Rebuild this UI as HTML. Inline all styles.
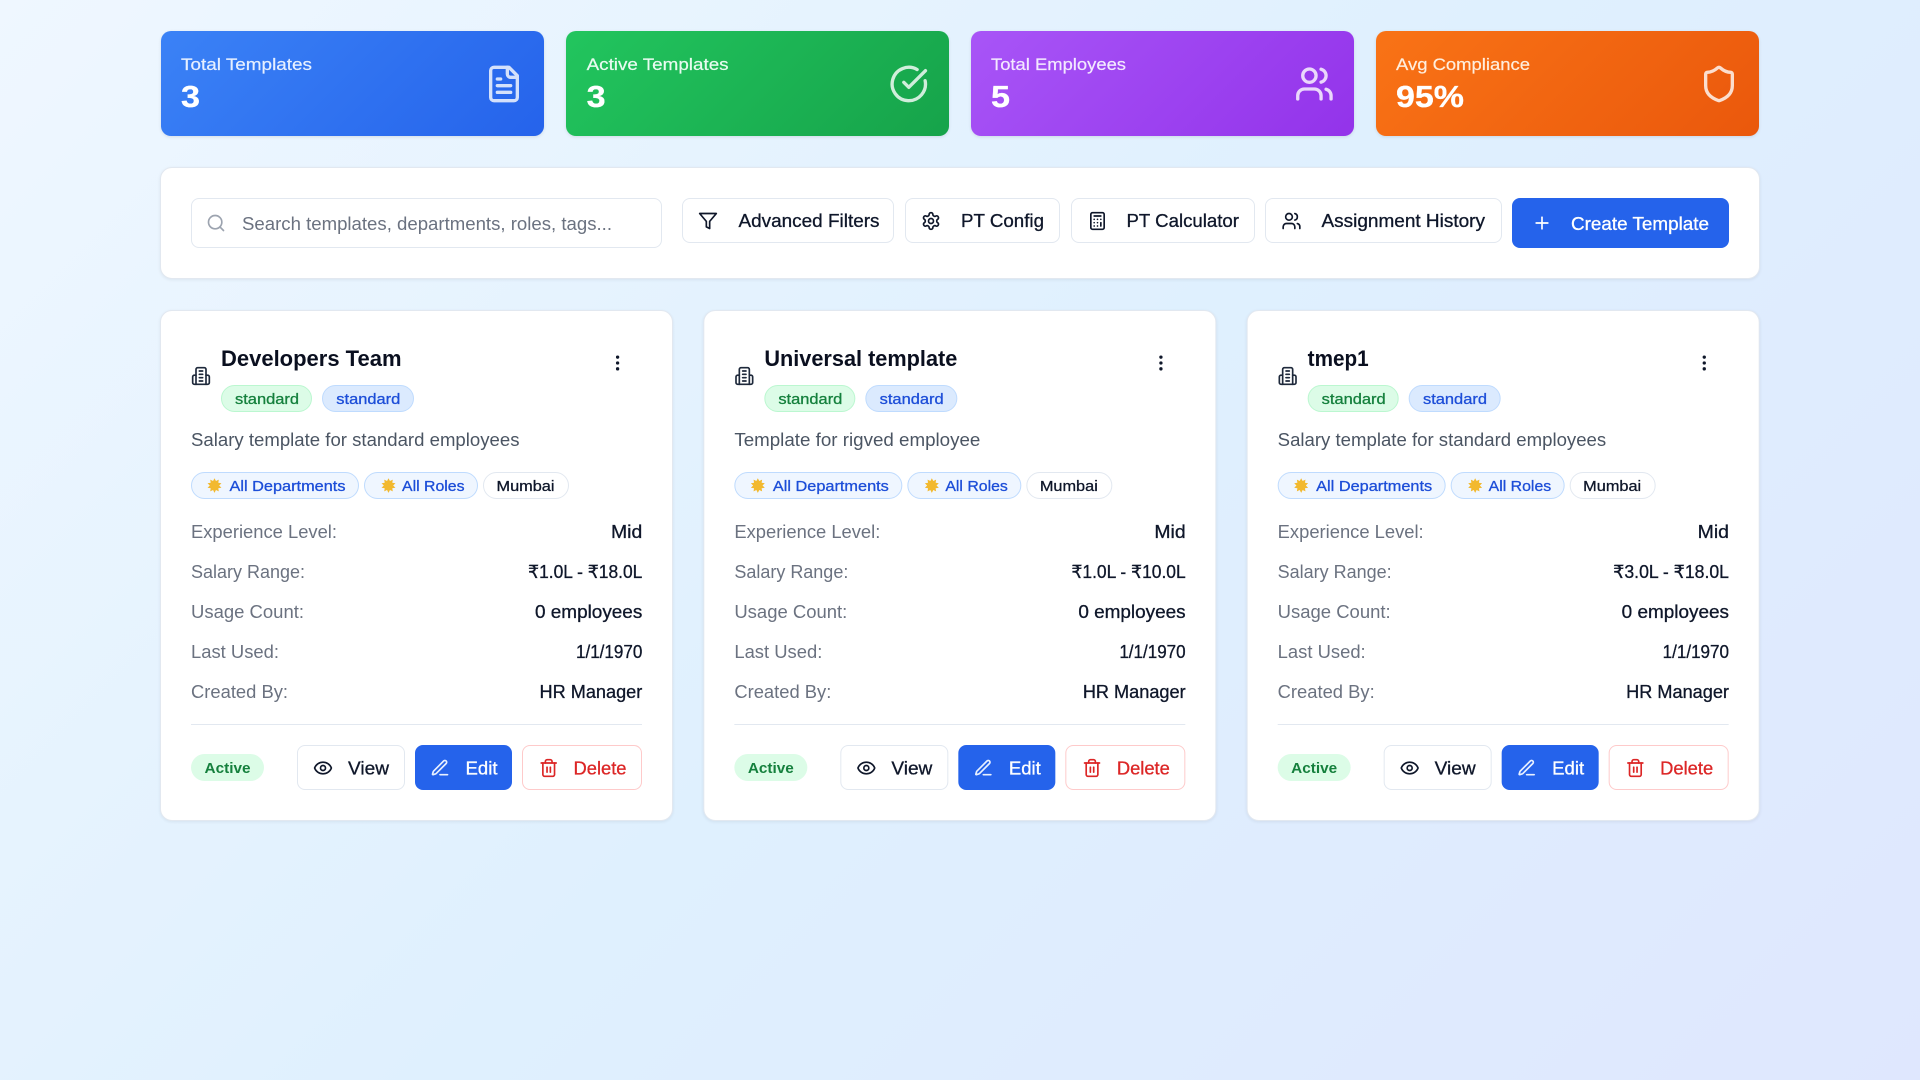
<!DOCTYPE html>
<html lang="en">
<head>
<meta charset="utf-8">
<title>Salary Templates</title>
<style>
html,body{margin:0;padding:0;width:1920px;height:1080px;overflow:hidden}
body{position:relative;background:linear-gradient(135deg,#eff7ff 0%,#dff0fe 50%,#dfe7fe 100%);font-family:"Liberation Sans",Arial,sans-serif}
.b{position:absolute;box-sizing:border-box}
.c{position:absolute;left:0;top:0;width:0;height:0}
.stat{top:31px;height:105px;width:383px;border-radius:10px;box-shadow:0 1px 3px rgba(0,0,0,.1)}
.panel{background:#fff;border:1px solid #e2e8f0;border-radius:12px;box-shadow:0 1px 3px rgba(15,23,42,.07)}
.btn{background:#fff;border:1px solid #e2e8f0;border-radius:8px}
.pill{border-radius:14px;border:1px solid}
svg.o{position:absolute;left:0;top:0}
text{font-family:"Liberation Sans",Arial,"DejaVu Sans",sans-serif;white-space:pre}
.i{fill:none;stroke:currentColor;stroke-width:2;stroke-linecap:round;stroke-linejoin:round}
.m{stroke:currentColor;stroke-width:.3}
.lb{font-size:18px;fill:#6b7280}
.v{font-size:18px;fill:#0f172a;color:#0f172a}
.tag{font-size:15px}
.ttl{font-size:22.5px;font-weight:700;fill:#0a0f1f}
</style>
</head>
<body>
<div class="b stat" style="left:161px;background:linear-gradient(135deg,#3b82f6,#2563eb)"></div>
<div class="b stat" style="left:566px;background:linear-gradient(135deg,#22c55e,#16a34a)"></div>
<div class="b stat" style="left:971px;background:linear-gradient(135deg,#a855f7,#9333ea)"></div>
<div class="b stat" style="left:1376px;background:linear-gradient(135deg,#f97316,#ea580c)"></div>

<div class="b panel" style="left:160.4px;top:167px;width:1599.2px;height:111.5px"></div>
<div class="b btn" style="left:191px;top:198px;width:471px;height:50px"></div>
<div class="b btn" style="left:682px;top:198px;width:212px;height:45px"></div>
<div class="b btn" style="left:905px;top:198px;width:155px;height:45px"></div>
<div class="b btn" style="left:1071px;top:198px;width:184px;height:45px"></div>
<div class="b btn" style="left:1265px;top:198px;width:237px;height:45px"></div>
<div class="b" style="left:1512px;top:198px;width:217px;height:50px;border-radius:8px;background:#2563eb"></div>

<!-- card 1 -->
<div class="c">
<div class="b panel" style="left:160.4px;top:309.5px;width:512.5px;height:511px"></div>
<div class="b pill" style="left:221px;top:385px;width:91px;height:27px;background:#dcfce7;border-color:#bbf7d0"></div>
<div class="b pill" style="left:322px;top:385px;width:91.5px;height:27px;background:#dbeafe;border-color:#bfdbfe"></div>
<div class="b pill" style="left:191px;top:472px;width:168px;height:27px;background:#eff6ff;border-color:#bfdbfe"></div>
<div class="b pill" style="left:364px;top:472px;width:113.5px;height:27px;background:#eff6ff;border-color:#bfdbfe"></div>
<div class="b pill" style="left:482.8px;top:472px;width:86px;height:27px;background:#fff;border-color:#e2e8f0"></div>
<div class="b" style="left:191px;top:724px;width:451.33px;height:1px;background:#e2e8f0"></div>
<div class="b" style="left:191px;top:754px;width:73px;height:27px;border-radius:14px;background:#dcfce7"></div>
<div class="b btn" style="left:297px;top:745px;width:108px;height:45px"></div>
<div class="b" style="left:415px;top:745px;width:97px;height:45px;border-radius:8px;background:#2563eb"></div>
<div class="b btn" style="left:522px;top:745px;width:120.33px;height:45px;border-color:#fecaca"></div>
</div>

<!-- card 2 -->
<div class="c" style="transform:translateX(543.33px)">
<div class="b panel" style="left:160.4px;top:309.5px;width:512.5px;height:511px"></div>
<div class="b pill" style="left:221px;top:385px;width:91px;height:27px;background:#dcfce7;border-color:#bbf7d0"></div>
<div class="b pill" style="left:322px;top:385px;width:91.5px;height:27px;background:#dbeafe;border-color:#bfdbfe"></div>
<div class="b pill" style="left:191px;top:472px;width:168px;height:27px;background:#eff6ff;border-color:#bfdbfe"></div>
<div class="b pill" style="left:364px;top:472px;width:113.5px;height:27px;background:#eff6ff;border-color:#bfdbfe"></div>
<div class="b pill" style="left:482.8px;top:472px;width:86px;height:27px;background:#fff;border-color:#e2e8f0"></div>
<div class="b" style="left:191px;top:724px;width:451.33px;height:1px;background:#e2e8f0"></div>
<div class="b" style="left:191px;top:754px;width:73px;height:27px;border-radius:14px;background:#dcfce7"></div>
<div class="b btn" style="left:297px;top:745px;width:108px;height:45px"></div>
<div class="b" style="left:415px;top:745px;width:97px;height:45px;border-radius:8px;background:#2563eb"></div>
<div class="b btn" style="left:522px;top:745px;width:120.33px;height:45px;border-color:#fecaca"></div>
</div>

<!-- card 3 -->
<div class="c" style="transform:translateX(1086.67px)">
<div class="b panel" style="left:160.4px;top:309.5px;width:512.5px;height:511px"></div>
<div class="b pill" style="left:221px;top:385px;width:91px;height:27px;background:#dcfce7;border-color:#bbf7d0"></div>
<div class="b pill" style="left:322px;top:385px;width:91.5px;height:27px;background:#dbeafe;border-color:#bfdbfe"></div>
<div class="b pill" style="left:191px;top:472px;width:168px;height:27px;background:#eff6ff;border-color:#bfdbfe"></div>
<div class="b pill" style="left:364px;top:472px;width:113.5px;height:27px;background:#eff6ff;border-color:#bfdbfe"></div>
<div class="b pill" style="left:482.8px;top:472px;width:86px;height:27px;background:#fff;border-color:#e2e8f0"></div>
<div class="b" style="left:191px;top:724px;width:451.33px;height:1px;background:#e2e8f0"></div>
<div class="b" style="left:191px;top:754px;width:73px;height:27px;border-radius:14px;background:#dcfce7"></div>
<div class="b btn" style="left:297px;top:745px;width:108px;height:45px"></div>
<div class="b" style="left:415px;top:745px;width:97px;height:45px;border-radius:8px;background:#2563eb"></div>
<div class="b btn" style="left:522px;top:745px;width:120.33px;height:45px;border-color:#fecaca"></div>
</div>

<svg class="o" width="1920" height="1080" viewBox="0 0 1920 1080" xmlns="http://www.w3.org/2000/svg">
<defs>
<symbol id="file" viewBox="0 0 24 24"><g class="i"><path d="M15 2H6a2 2 0 0 0-2 2v16a2 2 0 0 0 2 2h12a2 2 0 0 0 2-2V7Z"/><path d="M14 2v4a2 2 0 0 0 2 2h4"/><path d="M10 9H8"/><path d="M16 13H8"/><path d="M16 17H8"/></g></symbol>
<symbol id="check" viewBox="0 0 24 24"><g class="i"><path d="M21.801 10A10 10 0 1 1 17 3.335"/><path d="m9 11 3 3L22 4"/></g></symbol>
<symbol id="users" viewBox="0 0 24 24"><g class="i"><path d="M16 21v-2a4 4 0 0 0-4-4H6a4 4 0 0 0-4 4v2"/><circle cx="9" cy="7" r="4"/><path d="M22 21v-2a4 4 0 0 0-3-3.87"/><path d="M16 3.13a4 4 0 0 1 0 7.75"/></g></symbol>
<symbol id="shield" viewBox="0 0 24 24"><g class="i"><path d="M20 13c0 5-3.5 7.5-7.66 8.95a1 1 0 0 1-.67-.01C7.5 20.5 4 18 4 13V6a1 1 0 0 1 1-1c2 0 4.5-1.2 6.24-2.72a1.17 1.17 0 0 1 1.52 0C14.51 3.81 17 5 19 5a1 1 0 0 1 1 1z"/></g></symbol>
<symbol id="search" viewBox="0 0 24 24"><g class="i"><circle cx="11" cy="11" r="8"/><path d="m21 21-4.3-4.3"/></g></symbol>
<symbol id="funnel" viewBox="0 0 24 24"><g class="i"><polygon points="22 3 2 3 10 12.46 10 19 14 21 14 12.46 22 3"/></g></symbol>
<symbol id="gear" viewBox="0 0 24 24"><g class="i"><path d="M12.22 2h-.44a2 2 0 0 0-2 2v.18a2 2 0 0 1-1 1.73l-.43.25a2 2 0 0 1-2 0l-.15-.08a2 2 0 0 0-2.73.73l-.22.38a2 2 0 0 0 .73 2.73l.15.1a2 2 0 0 1 1 1.72v.51a2 2 0 0 1-1 1.74l-.15.09a2 2 0 0 0-.73 2.73l.22.38a2 2 0 0 0 2.73.73l.15-.08a2 2 0 0 1 2 0l.43.25a2 2 0 0 1 1 1.73V20a2 2 0 0 0 2 2h.44a2 2 0 0 0 2-2v-.18a2 2 0 0 1 1-1.73l.43-.25a2 2 0 0 1 2 0l.15.08a2 2 0 0 0 2.73-.73l.22-.39a2 2 0 0 0-.73-2.73l-.15-.08a2 2 0 0 1-1-1.74v-.5a2 2 0 0 1 1-1.74l.15-.09a2 2 0 0 0 .73-2.73l-.22-.38a2 2 0 0 0-2.73-.73l-.15.08a2 2 0 0 1-2 0l-.43-.25a2 2 0 0 1-1-1.73V4a2 2 0 0 0-2-2z"/><circle cx="12" cy="12" r="3"/></g></symbol>
<symbol id="calc" viewBox="0 0 24 24"><g class="i"><rect x="4" y="2" width="16" height="20" rx="2"/><path d="M8 6h8"/><path d="M16 14v4"/><path d="M16 10h.01M12 10h.01M8 10h.01M12 14h.01M8 14h.01M12 18h.01M8 18h.01"/></g></symbol>
<symbol id="plus" viewBox="0 0 24 24"><g class="i"><path d="M5 12h14"/><path d="M12 5v14"/></g></symbol>
<symbol id="bld" viewBox="0 0 24 24"><g class="i"><path d="M6 22V4a2 2 0 0 1 2-2h8a2 2 0 0 1 2 2v18Z"/><path d="M6 11H4a2 2 0 0 0-2 2v7a2 2 0 0 0 2 2h2"/><path d="M18 11h2a2 2 0 0 1 2 2v7a2 2 0 0 1-2 2h-2"/><path d="M10 6h4"/><path d="M10 10h4"/><path d="M10 14h4"/><path d="M10 18h4"/></g></symbol>
<symbol id="more" viewBox="0 0 24 24"><g class="i"><circle cx="12" cy="12" r="1"/><circle cx="12" cy="5" r="1"/><circle cx="12" cy="19" r="1"/></g></symbol>
<symbol id="eye" viewBox="0 0 24 24"><g class="i"><path d="M2.062 12.348a1 1 0 0 1 0-.696 10.75 10.75 0 0 1 19.876 0 1 1 0 0 1 0 .696 10.75 10.75 0 0 1-19.876 0"/><circle cx="12" cy="12" r="3"/></g></symbol>
<symbol id="pen" viewBox="0 0 24 24"><g class="i"><path d="M12 20h9"/><path d="M16.376 3.622a1 1 0 0 1 3.002 3.002L7.368 18.635a2 2 0 0 1-.855.506l-2.872.838a.5.5 0 0 1-.62-.62l.838-2.872a2 2 0 0 1 .506-.854z"/></g></symbol>
<symbol id="trash" viewBox="0 0 24 24"><g class="i"><path d="M3 6h18"/><path d="M19 6v14c0 1-1 2-2 2H7c-1 0-2-1-2-2V6"/><path d="M8 6V4c0-1 1-2 2-2h4c1 0 2 1 2 2v2"/><path d="M10 11v6"/><path d="M14 11v6"/></g></symbol>
<symbol id="star" viewBox="0 0 16 16"><polygon fill="#f2b92f" points="8,.2 9.55,3.24 12.58,1.69 12.05,5.06 15.42,5.59 13,8 15.42,10.41 12.05,10.94 12.58,14.31 9.55,12.76 8,15.8 6.45,12.76 3.42,14.31 3.95,10.94 .58,10.41 3,8 .58,5.59 3.95,5.06 3.42,1.69 6.45,3.24"/></symbol>
</defs>

<!-- stats -->
<g fill="#fff">
<text class="m" style="stroke-width:.2" color="#e6efff" x="181" y="70" font-size="16.5" textLength="131" lengthAdjust="spacingAndGlyphs" fill="#e6efff">Total Templates</text>
<text class="m" color="#fff" x="181" y="107" font-size="31" font-weight="700" textLength="19" lengthAdjust="spacingAndGlyphs">3</text>
<text class="m" style="stroke-width:.2" color="#e8fbf0" x="586.6" y="70" font-size="16.5" textLength="142" lengthAdjust="spacingAndGlyphs" fill="#e8fbf0">Active Templates</text>
<text class="m" color="#fff" x="586.6" y="107" font-size="31" font-weight="700" textLength="19" lengthAdjust="spacingAndGlyphs">3</text>
<text class="m" style="stroke-width:.2" color="#f3e8ff" x="991" y="70" font-size="16.5" textLength="135" lengthAdjust="spacingAndGlyphs" fill="#f3e8ff">Total Employees</text>
<text class="m" color="#fff" x="991" y="107" font-size="31" font-weight="700" textLength="19" lengthAdjust="spacingAndGlyphs">5</text>
<text class="m" style="stroke-width:.2" color="#ffeedd" x="1396" y="70" font-size="16.5" textLength="134" lengthAdjust="spacingAndGlyphs" fill="#ffeedd">Avg Compliance</text>
<text class="m" color="#fff" x="1396" y="107" font-size="31" font-weight="700" textLength="68" lengthAdjust="spacingAndGlyphs">95%</text>
</g>
<g color="#fff" opacity=".8">
<use href="#file" x="484" y="64" width="40" height="40"/>
<use href="#check" x="888.8" y="64" width="40" height="40"/>
<use href="#users" x="1294.4" y="64" width="40" height="40"/>
<use href="#shield" x="1699" y="64" width="40" height="40"/>
</g>

<!-- toolbar -->
<use href="#search" x="206" y="213" width="20" height="20" color="#9ca3af"/>
<text x="242" y="230" font-size="18" fill="#6b7280" textLength="370" lengthAdjust="spacingAndGlyphs">Search templates, departments, roles, tags...</text>
<g color="#0f172a">
<use href="#funnel" x="698" y="211" width="20" height="20"/>
<use href="#gear" x="921" y="211" width="20" height="20"/>
<use href="#calc" x="1087.5" y="211" width="20" height="20"/>
<use href="#users" x="1281.5" y="211" width="20" height="20"/>
</g>
<g class="v" font-size="18">
<text class="m v" x="738.5" y="227" textLength="141" lengthAdjust="spacingAndGlyphs">Advanced Filters</text>
<text class="m v" x="961" y="227" textLength="83" lengthAdjust="spacingAndGlyphs">PT Config</text>
<text class="m v" x="1126.5" y="227" textLength="112.5" lengthAdjust="spacingAndGlyphs">PT Calculator</text>
<text class="m v" x="1321.5" y="227" textLength="163.5" lengthAdjust="spacingAndGlyphs">Assignment History</text>
</g>
<use href="#plus" x="1532" y="213" width="20" height="20" color="#fff"/>
<text class="m" x="1571" y="230" font-size="18" fill="#fff" color="#fff" textLength="138" lengthAdjust="spacingAndGlyphs">Create Template</text>

<!-- CARD 1 -->
<g>
<use href="#bld" x="191" y="366" width="20" height="20" color="#1e293b"/>
<text class="ttl" x="221" y="366" textLength="180.5" lengthAdjust="spacingAndGlyphs">Developers Team</text>
<use href="#more" x="607.6" y="353" width="20" height="20" color="#0f172a"/>
<text class="tag m" x="235" y="404" fill="#15803d" color="#15803d" textLength="64" lengthAdjust="spacingAndGlyphs">standard</text>
<text class="tag m" x="336.3" y="404" fill="#1d4ed8" color="#1d4ed8" textLength="64" lengthAdjust="spacingAndGlyphs">standard</text>
<text x="191" y="446" font-size="18" fill="#4b5563" textLength="328.5" lengthAdjust="spacingAndGlyphs">Salary template for standard employees</text>
<use href="#star" x="207" y="478" width="15" height="15"/>
<text class="tag m" x="229.5" y="491" fill="#1d4ed8" color="#1d4ed8" textLength="116" lengthAdjust="spacingAndGlyphs">All Departments</text>
<use href="#star" x="381" y="478" width="15" height="15"/>
<text class="tag m" x="402" y="491" fill="#1d4ed8" color="#1d4ed8" textLength="62.5" lengthAdjust="spacingAndGlyphs">All Roles</text>
<text class="tag m" x="496.5" y="491" fill="#0f172a" color="#0f172a" textLength="58" lengthAdjust="spacingAndGlyphs">Mumbai</text>
<text class="lb" x="191" y="538" textLength="146" lengthAdjust="spacingAndGlyphs">Experience Level:</text>
<text class="lb" x="191" y="578" textLength="114" lengthAdjust="spacingAndGlyphs">Salary Range:</text>
<text class="lb" x="191" y="618" textLength="113" lengthAdjust="spacingAndGlyphs">Usage Count:</text>
<text class="lb" x="191" y="658" textLength="88" lengthAdjust="spacingAndGlyphs">Last Used:</text>
<text class="lb" x="191" y="698" textLength="97" lengthAdjust="spacingAndGlyphs">Created By:</text>
<text class="v m" x="611" y="538" textLength="31.3" lengthAdjust="spacingAndGlyphs">Mid</text>
<text class="v m" x="528" y="578" textLength="114.3" lengthAdjust="spacingAndGlyphs">₹1.0L - ₹18.0L</text>
<text class="v m" x="535" y="618" textLength="107.3" lengthAdjust="spacingAndGlyphs">0 employees</text>
<text class="v m" x="576" y="658" textLength="66.3" lengthAdjust="spacingAndGlyphs">1/1/1970</text>
<text class="v m" x="539.5" y="698" textLength="102.8" lengthAdjust="spacingAndGlyphs">HR Manager</text>
<text class="tag" font-weight="700" x="204.5" y="773" fill="#15803d" textLength="46" lengthAdjust="spacingAndGlyphs">Active</text>
<use href="#eye" x="313" y="758" width="20" height="20" color="#0f172a"/>
<text class="v m" x="348" y="774.5" textLength="41" lengthAdjust="spacingAndGlyphs">View</text>
<use href="#pen" x="430" y="758" width="20" height="20" color="#e8f0ff"/>
<text class="m" x="465.5" y="774.5" font-size="18" fill="#fff" color="#fff" textLength="32" lengthAdjust="spacingAndGlyphs">Edit</text>
<use href="#trash" x="538.7" y="758" width="20" height="20" color="#dc2626"/>
<text class="m" x="573.5" y="774.5" font-size="18" fill="#dc2626" color="#dc2626" textLength="53" lengthAdjust="spacingAndGlyphs">Delete</text>
</g>

<!-- CARD 2 -->
<g transform="translate(543.33 0)">
<use href="#bld" x="191" y="366" width="20" height="20" color="#1e293b"/>
<text class="ttl" x="221" y="366" textLength="193" lengthAdjust="spacingAndGlyphs">Universal template</text>
<use href="#more" x="607.6" y="353" width="20" height="20" color="#0f172a"/>
<text class="tag m" x="235" y="404" fill="#15803d" color="#15803d" textLength="64" lengthAdjust="spacingAndGlyphs">standard</text>
<text class="tag m" x="336.3" y="404" fill="#1d4ed8" color="#1d4ed8" textLength="64" lengthAdjust="spacingAndGlyphs">standard</text>
<text x="191" y="446" font-size="18" fill="#4b5563" textLength="246" lengthAdjust="spacingAndGlyphs">Template for rigved employee</text>
<use href="#star" x="207" y="478" width="15" height="15"/>
<text class="tag m" x="229.5" y="491" fill="#1d4ed8" color="#1d4ed8" textLength="116" lengthAdjust="spacingAndGlyphs">All Departments</text>
<use href="#star" x="381" y="478" width="15" height="15"/>
<text class="tag m" x="402" y="491" fill="#1d4ed8" color="#1d4ed8" textLength="62.5" lengthAdjust="spacingAndGlyphs">All Roles</text>
<text class="tag m" x="496.5" y="491" fill="#0f172a" color="#0f172a" textLength="58" lengthAdjust="spacingAndGlyphs">Mumbai</text>
<text class="lb" x="191" y="538" textLength="146" lengthAdjust="spacingAndGlyphs">Experience Level:</text>
<text class="lb" x="191" y="578" textLength="114" lengthAdjust="spacingAndGlyphs">Salary Range:</text>
<text class="lb" x="191" y="618" textLength="113" lengthAdjust="spacingAndGlyphs">Usage Count:</text>
<text class="lb" x="191" y="658" textLength="88" lengthAdjust="spacingAndGlyphs">Last Used:</text>
<text class="lb" x="191" y="698" textLength="97" lengthAdjust="spacingAndGlyphs">Created By:</text>
<text class="v m" x="611" y="538" textLength="31.3" lengthAdjust="spacingAndGlyphs">Mid</text>
<text class="v m" x="528" y="578" textLength="114.3" lengthAdjust="spacingAndGlyphs">₹1.0L - ₹10.0L</text>
<text class="v m" x="535" y="618" textLength="107.3" lengthAdjust="spacingAndGlyphs">0 employees</text>
<text class="v m" x="576" y="658" textLength="66.3" lengthAdjust="spacingAndGlyphs">1/1/1970</text>
<text class="v m" x="539.5" y="698" textLength="102.8" lengthAdjust="spacingAndGlyphs">HR Manager</text>
<text class="tag" font-weight="700" x="204.5" y="773" fill="#15803d" textLength="46" lengthAdjust="spacingAndGlyphs">Active</text>
<use href="#eye" x="313" y="758" width="20" height="20" color="#0f172a"/>
<text class="v m" x="348" y="774.5" textLength="41" lengthAdjust="spacingAndGlyphs">View</text>
<use href="#pen" x="430" y="758" width="20" height="20" color="#e8f0ff"/>
<text class="m" x="465.5" y="774.5" font-size="18" fill="#fff" color="#fff" textLength="32" lengthAdjust="spacingAndGlyphs">Edit</text>
<use href="#trash" x="538.7" y="758" width="20" height="20" color="#dc2626"/>
<text class="m" x="573.5" y="774.5" font-size="18" fill="#dc2626" color="#dc2626" textLength="53" lengthAdjust="spacingAndGlyphs">Delete</text>
</g>

<!-- CARD 3 -->
<g transform="translate(1086.67 0)">
<use href="#bld" x="191" y="366" width="20" height="20" color="#1e293b"/>
<text class="ttl" x="221" y="366" textLength="61" lengthAdjust="spacingAndGlyphs">tmep1</text>
<use href="#more" x="607.6" y="353" width="20" height="20" color="#0f172a"/>
<text class="tag m" x="235" y="404" fill="#15803d" color="#15803d" textLength="64" lengthAdjust="spacingAndGlyphs">standard</text>
<text class="tag m" x="336.3" y="404" fill="#1d4ed8" color="#1d4ed8" textLength="64" lengthAdjust="spacingAndGlyphs">standard</text>
<text x="191" y="446" font-size="18" fill="#4b5563" textLength="328.5" lengthAdjust="spacingAndGlyphs">Salary template for standard employees</text>
<use href="#star" x="207" y="478" width="15" height="15"/>
<text class="tag m" x="229.5" y="491" fill="#1d4ed8" color="#1d4ed8" textLength="116" lengthAdjust="spacingAndGlyphs">All Departments</text>
<use href="#star" x="381" y="478" width="15" height="15"/>
<text class="tag m" x="402" y="491" fill="#1d4ed8" color="#1d4ed8" textLength="62.5" lengthAdjust="spacingAndGlyphs">All Roles</text>
<text class="tag m" x="496.5" y="491" fill="#0f172a" color="#0f172a" textLength="58" lengthAdjust="spacingAndGlyphs">Mumbai</text>
<text class="lb" x="191" y="538" textLength="146" lengthAdjust="spacingAndGlyphs">Experience Level:</text>
<text class="lb" x="191" y="578" textLength="114" lengthAdjust="spacingAndGlyphs">Salary Range:</text>
<text class="lb" x="191" y="618" textLength="113" lengthAdjust="spacingAndGlyphs">Usage Count:</text>
<text class="lb" x="191" y="658" textLength="88" lengthAdjust="spacingAndGlyphs">Last Used:</text>
<text class="lb" x="191" y="698" textLength="97" lengthAdjust="spacingAndGlyphs">Created By:</text>
<text class="v m" x="611" y="538" textLength="31.3" lengthAdjust="spacingAndGlyphs">Mid</text>
<text class="v m" x="526.5" y="578" textLength="115.8" lengthAdjust="spacingAndGlyphs">₹3.0L - ₹18.0L</text>
<text class="v m" x="535" y="618" textLength="107.3" lengthAdjust="spacingAndGlyphs">0 employees</text>
<text class="v m" x="576" y="658" textLength="66.3" lengthAdjust="spacingAndGlyphs">1/1/1970</text>
<text class="v m" x="539.5" y="698" textLength="102.8" lengthAdjust="spacingAndGlyphs">HR Manager</text>
<text class="tag" font-weight="700" x="204.5" y="773" fill="#15803d" textLength="46" lengthAdjust="spacingAndGlyphs">Active</text>
<use href="#eye" x="313" y="758" width="20" height="20" color="#0f172a"/>
<text class="v m" x="348" y="774.5" textLength="41" lengthAdjust="spacingAndGlyphs">View</text>
<use href="#pen" x="430" y="758" width="20" height="20" color="#e8f0ff"/>
<text class="m" x="465.5" y="774.5" font-size="18" fill="#fff" color="#fff" textLength="32" lengthAdjust="spacingAndGlyphs">Edit</text>
<use href="#trash" x="538.7" y="758" width="20" height="20" color="#dc2626"/>
<text class="m" x="573.5" y="774.5" font-size="18" fill="#dc2626" color="#dc2626" textLength="53" lengthAdjust="spacingAndGlyphs">Delete</text>
</g>
</svg>
</body>
</html>
